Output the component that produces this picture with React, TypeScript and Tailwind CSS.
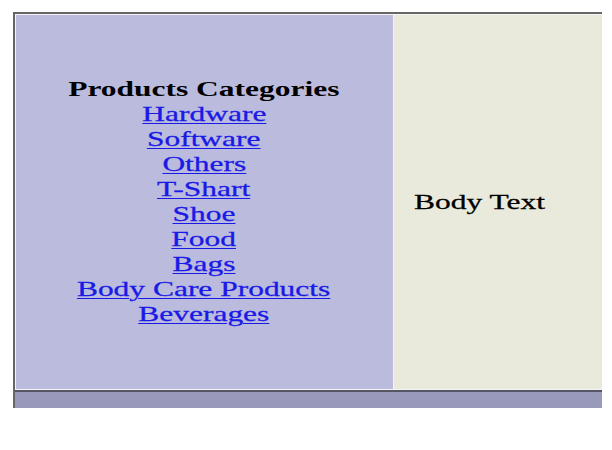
const categories = [
  "Hardware",
  "Software",
  "Others",
  "T-Shart",
  "Shoe",
  "Food",
  "Bags",
  "Body Care Products",
  "Beverages",
];

export default function App() {
  return (
    <div className="h-[450px] w-[612px] overflow-hidden bg-white pl-[13px] pt-3 font-['Liberation_Serif',serif] text-[22px] leading-[25px] text-black">
      <div className="w-[589px] border-l-2 border-t-2 border-[#666666]">
        <div className="flex h-[375px] border-l border-t border-[#f4f4f4]">
          <div className="flex w-[377px] flex-col items-center justify-center bg-[#bbbbdd] pb-[2px] pr-px">
            <span className="inline-block scale-x-[1.43] font-bold">Products Categories</span>
            {categories.map((name) => (
              <a
                key={name}
                href="#"
                className="inline-block scale-x-[1.43] text-[#1a1ae6] underline decoration-1 underline-offset-2 [-webkit-text-stroke:0.3px_#1a1ae6]"
              >
                {name}
              </a>
            ))}
          </div>
          <div className="flex flex-1 items-center border-l border-[#f4f4f0] bg-[#eaeadc] pb-[2px] pl-5">
            <span className="inline-block origin-left scale-x-[1.43] [-webkit-text-stroke:0.3px_black]">Body Text</span>
          </div>
        </div>
        <div className="h-px bg-[#f4f4f4]" />
        <div className="h-[18px] border-t-2 border-[#555566] bg-[#9999bb]" />
      </div>
    </div>
  );
}
